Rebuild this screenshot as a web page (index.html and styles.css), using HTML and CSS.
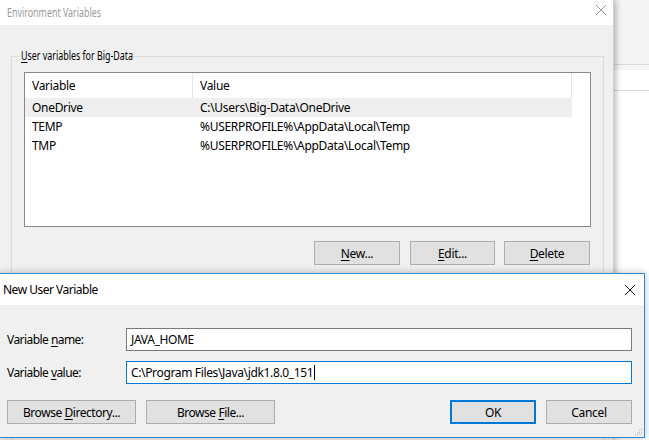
FILE: index.html
```html
<!DOCTYPE html>
<html>
<head>
<meta charset="utf-8">
<link rel="stylesheet" href="styles.css">
</head>
<body>
<div class="desktop">
  <div class="back-window">
    <div class="bw-band bw-band1"></div>
    <div class="bw-band bw-band2"></div>
  </div>

  <div class="env-window">
    <div class="titlebar inactive">
      <span class="title"><span class="squeeze">Environment Variables</span></span>
      <svg class="close" width="12" height="12" viewBox="0 0 12 12"><path d="M1 1L11 11M11 1L1 11" stroke="#9a9a9a" stroke-width="1" fill="none"/></svg>
    </div>
    <div class="env-body">
      <div class="group">
        <div class="group-label"><span class="squeeze"><u>U</u>ser variables for Big-Data</span></div>
        <div class="listview">
          <div class="lv-header">
            <div class="col col1">Variable</div>
            <div class="col col2">Value</div>
          </div>
          <div class="lv-row selected"><div class="col col1">OneDrive</div><div class="col col2">C:\Users\Big-Data\OneDrive</div></div>
          <div class="lv-row"><div class="col col1">TEMP</div><div class="col col2">%USERPROFILE%\AppData\Local\Temp</div></div>
          <div class="lv-row"><div class="col col1">TMP</div><div class="col col2">%USERPROFILE%\AppData\Local\Temp</div></div>
        </div>
        <div class="btn-row">
          <button class="btn btn-new"><span><u>N</u>ew...</span></button>
          <button class="btn btn-edit"><span><u>E</u>dit...</span></button>
          <button class="btn"><span><u>D</u>elete</span></button>
        </div>
      </div>
    </div>
  </div>

  <div class="dialog">
    <div class="titlebar active">
      <span class="title">New User Variable</span>
      <svg class="close" width="12" height="12" viewBox="0 0 12 12"><path d="M1 1L11 11M11 1L1 11" stroke="#1a1a1a" stroke-width="1" fill="none"/></svg>
    </div>
    <div class="dlg-body">
      <div class="field-row">
        <label class="field-label">Variable <u>n</u>ame:</label>
        <div class="input">JAVA_HOME</div>
      </div>
      <div class="field-row">
        <label class="field-label">Variable <u>v</u>alue:</label>
        <div class="input focused">C:\Program Files\Java\jdk1.8.0_151<span class="caret"></span></div>
      </div>
      <div class="dlg-buttons">
        <button class="btn wide"><span>Browse <u>D</u>irectory...</span></button>
        <button class="btn wide"><span>Browse <u>F</u>ile...</span></button>
        <div class="spacer"></div>
        <button class="btn default"><span>OK</span></button>
        <button class="btn"><span>Cancel</span></button>
      </div>
    </div>
    <svg class="grip" width="10" height="10" viewBox="0 0 10 10">
      <rect x="8" y="2" width="1" height="1" fill="#b5b5b5"/>
      <rect x="6" y="4" width="1" height="1" fill="#b5b5b5"/>
      <rect x="8" y="4" width="1" height="1" fill="#b5b5b5"/>
      <rect x="4" y="6" width="1" height="1" fill="#b5b5b5"/>
      <rect x="6" y="6" width="1" height="1" fill="#b5b5b5"/>
      <rect x="8" y="6" width="1" height="1" fill="#b5b5b5"/>
      <rect x="2" y="8" width="1" height="1" fill="#b5b5b5"/>
      <rect x="4" y="8" width="1" height="1" fill="#b5b5b5"/>
      <rect x="6" y="8" width="1" height="1" fill="#b5b5b5"/>
      <rect x="8" y="8" width="1" height="1" fill="#b5b5b5"/>
    </svg>
  </div>
</div>
</body>
</html>
```

FILE: styles.css
```css
* { box-sizing: border-box; }
html, body { margin: 0; padding: 0; }
body {
  width: 649px;
  height: 440px;
  overflow: hidden;
  font-family: "Noto Sans", "Open Sans", sans-serif;
  font-size: 12px;
  letter-spacing: -0.3px;
  color: #000;
  background: #ffffff;
}
u { text-decoration: underline; text-underline-offset: 2px; }

.desktop {
  position: relative;
  width: 649px;
  height: 440px;
  overflow: hidden;
  background: #ffffff;
}

/* window behind on the right */
.back-window {
  position: absolute;
  left: 600px;
  top: 0;
  width: 60px;
  height: 440px;
  background: #ffffff;
  display: flex;
  flex-direction: column;
}
.bw-band1 {
  height: 65px;
  background: #f4f4f4;
  border-bottom: 1px solid #d9d9d9;
}
.bw-band2 {
  height: 26px;
  border-bottom: 1px solid #d9d9d9;
  border-top: 5px solid #f4f4f4;
}

/* Environment Variables window */
.env-window {
  position: absolute;
  left: 0;
  top: 0;
  width: 614px;
  height: 440px;
  background: #f0f0f0;
  border-right: 1px solid #cfcfcf;
  box-shadow: 2px 0 6px rgba(0, 0, 0, 0.28);
  display: flex;
  flex-direction: column;
}
.titlebar {
  display: flex;
  align-items: center;
  background: #ffffff;
  flex: none;
}
.env-window .titlebar {
  height: 25px;
  padding-left: 7px;
  padding-right: 6px;
}
.squeeze {
  display: inline-block;
  transform: scaleX(0.74);
  transform-origin: left center;
  letter-spacing: 0;
  white-space: nowrap;
}
.titlebar.inactive .title {
  color: #9a9a9a;
  font-size: 12px;
}
.titlebar .title { flex: 1; }
.env-window .close { margin-bottom: 6px; }

.env-body {
  flex: 1;
  padding: 31px 0 0 11px;
}
.group {
  position: relative;
  padding: 0 0 0 12px;
  width: 593px;
  height: 400px;
  border: 1px solid #dcdcdc;
}
.group-label {
  position: absolute;
  left: 8px;
  top: -9px;
  width: 111px;
  height: 16px;
  line-height: 16px;
  padding-left: 1px;
  background: #f0f0f0;
  overflow: visible;
}

.listview {
  margin-top: 15px;
  width: 567px;
  height: 155px;
  background: #ffffff;
  border: 1px solid #828790;
  display: flex;
  flex-direction: column;
}
.lv-header {
  display: flex;
  height: 25px;
  align-items: stretch;
}
.lv-header .col {
  display: flex;
  align-items: center;
}
.lv-header .col1 { border-right: 1px solid #e5e5e5; }
.lv-header .col2 { border-right: 1px solid #e5e5e5; }
.col1 { width: 168px; padding-left: 7px; flex: none; }
.col2 { width: 379px; padding-left: 7px; flex: none; }
.lv-row {
  display: flex;
  height: 19px;
  align-items: center;
  line-height: 19px;
}
.lv-row.selected { background: #efefef; width: 547px; }

.btn-row {
  display: flex;
  justify-content: flex-end;
  gap: 9px;
  margin-top: 14px;
  width: 566px;
}
.btn-new { margin-right: 1px; }
.btn {
  font-family: inherit;
  font-size: 12px;
  letter-spacing: -0.3px;
  color: #000;
  height: 24px;
  width: 86px;
  padding: 0;
  background: #e1e1e1;
  border: 1px solid #adadad;
  border-radius: 0;
  display: flex;
  align-items: center;
  justify-content: center;
}
.btn-row .btn-edit { width: 85px; }

/* New User Variable dialog */
.dialog {
  position: absolute;
  left: -1px;
  top: 273px;
  width: 646px;
  height: 165px;
  background: #f0f0f0;
  border: 1px solid #2b8ad6;
  box-shadow: 0 0 8px rgba(0, 0, 0, 0.25);
  display: flex;
  flex-direction: column;
}
.dialog .titlebar {
  height: 31px;
  padding-left: 3px;
  padding-right: 8px;
}
.dialog .title { font-size: 12px; letter-spacing: -0.5px; }
.dlg-body {
  flex: 1;
  padding: 23px 12px 0 7px;
  display: flex;
  flex-direction: column;
}
.field-row {
  display: flex;
  align-items: center;
  height: 23px;
  margin-bottom: 10px;
}
.field-label {
  width: 119px;
  flex: none;
  letter-spacing: -0.55px;
}
.input {
  width: 507px;
  height: 23px;
  background: #ffffff;
  border: 1px solid #7a7a7a;
  padding-left: 4px;
  display: flex;
  align-items: center;
  letter-spacing: -0.35px;
}
.input.focused { border-color: #0078d7; }
.caret {
  display: inline-block;
  width: 1px;
  height: 15px;
  background: #000;
  margin-left: 1px;
}
.dlg-buttons {
  display: flex;
  gap: 10px;
  margin-top: 6px;
}
.dlg-buttons .btn.wide { width: 129px; letter-spacing: -0.45px; }
.dlg-buttons .btn { width: 86px; }
.spacer { flex: 1; }
.btn.default { border: 2px solid #0078d7; }
.grip {
  position: absolute;
  right: 1px;
  bottom: 1px;
}
```
